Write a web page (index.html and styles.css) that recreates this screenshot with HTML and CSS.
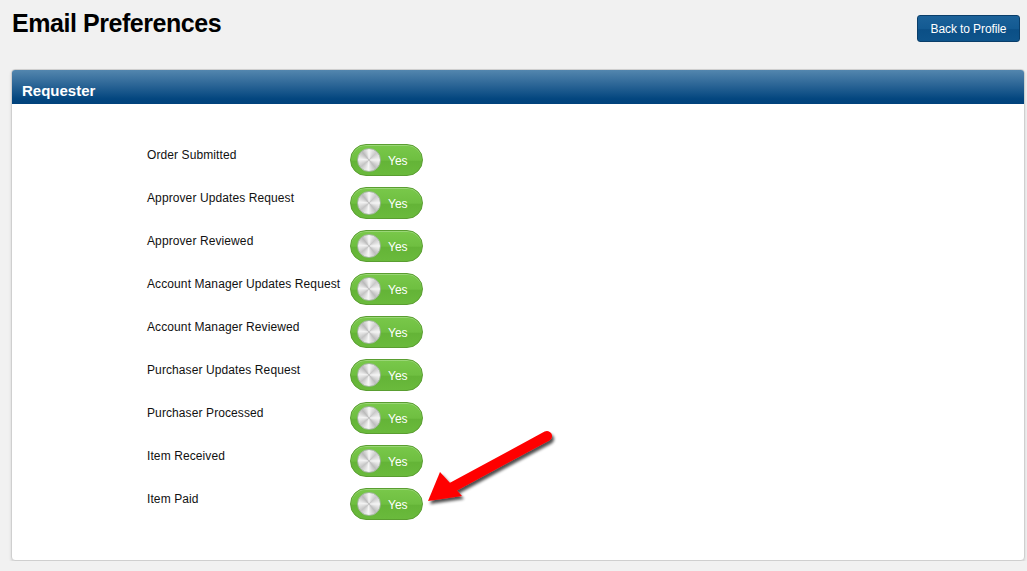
FILE: index.html
```html
<!DOCTYPE html>
<html>
<head>
<meta charset="utf-8">
<link rel="stylesheet" href="styles.css">
</head>
<body>
<div class="page">
  <div class="topbar">
    <h1 class="title">Email Preferences</h1>
    <button class="back-btn">Back to Profile</button>
  </div>
  <div class="panel">
    <div class="panel-head">Requester</div>
    <div class="panel-body">
      <div class="prefs">
        <div class="pref-label">Order Submitted</div>
        <div class="toggle"><span class="knob"></span><span class="yes">Yes</span></div>
        <div class="pref-label">Approver Updates Request</div>
        <div class="toggle"><span class="knob"></span><span class="yes">Yes</span></div>
        <div class="pref-label">Approver Reviewed</div>
        <div class="toggle"><span class="knob"></span><span class="yes">Yes</span></div>
        <div class="pref-label">Account Manager Updates Request</div>
        <div class="toggle"><span class="knob"></span><span class="yes">Yes</span></div>
        <div class="pref-label">Account Manager Reviewed</div>
        <div class="toggle"><span class="knob"></span><span class="yes">Yes</span></div>
        <div class="pref-label">Purchaser Updates Request</div>
        <div class="toggle"><span class="knob"></span><span class="yes">Yes</span></div>
        <div class="pref-label">Purchaser Processed</div>
        <div class="toggle"><span class="knob"></span><span class="yes">Yes</span></div>
        <div class="pref-label">Item Received</div>
        <div class="toggle"><span class="knob"></span><span class="yes">Yes</span></div>
        <div class="pref-label">Item Paid</div>
        <div class="toggle"><span class="knob"></span><span class="yes">Yes</span></div>
      </div>
    </div>
  </div>
  <svg class="arrow" width="140" height="90" viewBox="0 0 140 90">
    <defs>
      <filter id="sh" x="-20%" y="-20%" width="150%" height="150%">
        <feGaussianBlur in="SourceAlpha" stdDeviation="1.6"/>
        <feOffset dx="2" dy="3" result="b"/>
        <feComponentTransfer><feFuncA type="linear" slope="0.7"/></feComponentTransfer>
        <feMerge><feMergeNode/><feMergeNode in="SourceGraphic"/></feMerge>
      </filter>
    </defs>
    <g filter="url(#sh)">
      <line x1="126" y1="12" x2="30" y2="64" stroke="#ff0000" stroke-width="10" stroke-linecap="round"/>
      <polygon points="7,77 19,48 41,72" fill="#ff0000"/>
    </g>
  </svg>
</div>
</body>
</html>
```
FILE: styles.css
```css
html, body {
  margin: 0;
  padding: 0;
  background: #f1f1f1;
  font-family: "Liberation Sans", Arial, sans-serif;
}
.page {
  position: relative;
  padding: 0 2px 0 11px;
  width: 1014px;
}
.topbar {
  display: flex;
  justify-content: space-between;
  align-items: flex-start;
  height: 69px;
}
.title {
  margin: 7px 0 0 1px;
  font-size: 25px;
  font-weight: bold;
  color: #000;
  letter-spacing: -0.45px;
  line-height: 32px;
}
.back-btn {
  margin: 15px 5px 0 0;
  width: 103px;
  height: 27px;
  border: 1px solid #0a3e6a;
  border-radius: 3px;
  background: linear-gradient(#1c6299 0%, #135a92 50%, #0b4f86 55%, #0e548b 100%);
  color: #fff;
  font-family: "Liberation Sans", Arial, sans-serif;
  font-size: 12px;
  letter-spacing: -0.1px;
  padding: 0;
  cursor: pointer;
}
.panel {
  border: 1px solid #cfcfcf;
  border-radius: 4px;
  background: #fff;
  box-shadow: 0 2px 3px rgba(0,0,0,0.12);
  overflow: hidden;
}
.panel-head {
  height: 34px;
  background: linear-gradient(#5386ae 0%, #2f6898 40%, #03467f 85%, #01427c 100%);
  color: #fff;
  font-weight: bold;
  font-size: 15px;
  padding-left: 10px;
  box-sizing: border-box;
  line-height: 41px;
}
.panel-body {
  padding: 40px 0 40px 135px;
}
.prefs {
  display: grid;
  grid-template-columns: 203px 73px;
  row-gap: 11px;
}
.pref-label {
  font-size: 12px;
  color: #111;
  padding-top: 4px;
  line-height: 14px;
  letter-spacing: 0.1px;
}
.toggle {
  width: 73px;
  height: 32px;
  box-sizing: border-box;
  border: 1px solid #5a9e31;
  border-radius: 16px;
  background: linear-gradient(#79c84a 0%, #6fbf41 50%, #64b437 55%, #6aba3c 100%);
  display: flex;
  align-items: center;
  padding-left: 6px;
  box-shadow: inset 0 1px 0 rgba(255,255,255,0.25);
}
.knob {
  width: 24px;
  height: 24px;
  border-radius: 50%;
  border: 1px solid #9fb69a;
  background: conic-gradient(#f7f7f7 0deg, #c9c9c9 45deg, #f5f5f5 90deg, #bdbdbd 140deg, #f7f7f7 185deg, #c4c4c4 230deg, #f3f3f3 275deg, #bababa 320deg, #f7f7f7 360deg);
  box-sizing: border-box;
}
.yes {
  color: #fff;
  font-size: 12px;
  margin-left: 7px;
  padding-top: 1px;
}
.arrow {
  position: absolute;
  left: 421px;
  top: 424px;
}
```
